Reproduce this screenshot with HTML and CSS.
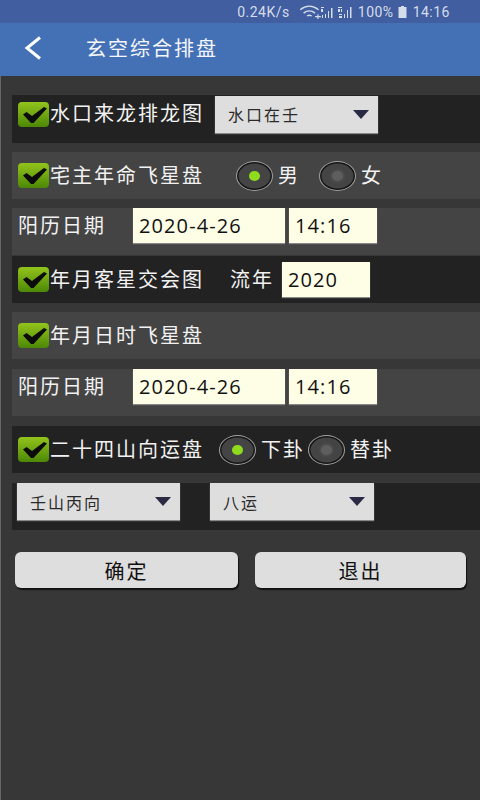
FILE: index.html
```html
<!DOCTYPE html>
<html lang="zh">
<head>
  <meta charset="UTF-8">
  <title>玄空综合排盘</title>
  <link rel="stylesheet" href="styles.css">
</head>
<body>

  <svg class="defs" width="0" height="0">
    <defs>
      <linearGradient id="chk" x1="0" y1="0" x2="0" y2="1">
        <stop offset="0" stop-color="#93c41c"/>
        <stop offset="1" stop-color="#4c8806"/>
      </linearGradient>
      <symbol id="check" viewBox="0 0 31 25">
        <rect width="31" height="25" rx="4" fill="url(#chk)"/>
        <path d="M5 12.500l3.500-2.500 5.500 4L26 5l3 1.500L15.500 21h-2.500z" fill="#0c0c0c"/>
      </symbol>
    </defs>
  </svg>

  <div class="status">
    <span>0.24K/s</span>
    <svg class="sig wifi" viewBox="0 0 20 12" width="23" height="14">
      <path d="M1 4c5-4 11-4 16 0M4 7c3-2.500 7-2.500 10 0M7 9.500c1.500-1 2.500-1 4 0" fill="none" stroke="#d5dcea" stroke-width="1.200"/>
      <path d="M14 10h5M16.500 8v4" stroke="#d5dcea" stroke-width="1"/>
    </svg>
    <svg class="sig one" viewBox="0 0 15 12" width="15" height="12">
      <path d="M1 1h3v1h-3zM1 3h2v3h-2zM2 9h1v3h-1zM5 8h1v4h-1zM8 5h1v7h-1zM11 2h1.500v10h-1.500z" fill="#d5dcea"/>
    </svg>
    <svg class="sig" viewBox="0 0 15 12" width="15" height="12">
      <path d="M0 1h4v1h-4zM0 3h2v3h-2zM3 3h1v3h-1zM1 8h3v1h-3zM1 10h3v2h-3zM6 8h1v4h-1zM9 4h1v8h-1zM12 1h1.500v11h-1.500z" fill="#d5dcea"/>
    </svg>
    <span class="pct">100%</span>
    <svg class="batt" viewBox="0 0 9 12" width="9" height="12">
      <path d="M3 0h3v1h2.500v11h-8v-11h2.500z" fill="#d5dcea"/>
    </svg>
    <span class="clock">14:16</span>
  </div>

  <header class="title">
    <svg class="back" viewBox="0 0 18 24" width="18" height="24">
      <path d="M16 1.500L3 12l13 10.500" fill="none" stroke="#fff" stroke-width="3"/>
    </svg>
    <h1>玄空综合排盘</h1>
  </header>

  <main class="form">
    <div class="row dark first">
      <svg class="check"><use href="#check"/></svg>
      <span class="label">水口来龙排龙图</span>
      <div class="select wide"><span>水口在壬</span><i class="arrow"></i></div>
    </div>

    <div class="row gap">
      <svg class="check"><use href="#check"/></svg>
      <span class="label">宅主年命飞星盘</span>
      <div class="radios sex">
        <span class="radio on"></span><span class="label">男</span>
        <span class="radio"></span><span class="label">女</span>
      </div>
    </div>

    <div class="row gap top">
      <span class="label date-label">阳历日期</span>
      <div class="input date">2020-4-26</div>
      <div class="input time">14:16</div>
    </div>

    <div class="row dark tight">
      <svg class="check"><use href="#check"/></svg>
      <span class="label">年月客星交会图</span>
      <span class="label liunian">流年</span>
      <div class="input year">2020</div>
    </div>

    <div class="row gap">
      <svg class="check"><use href="#check"/></svg>
      <span class="label">年月日时飞星盘</span>
    </div>

    <div class="row gap-wide top">
      <span class="label date-label">阳历日期</span>
      <div class="input date">2020-4-26</div>
      <div class="input time">14:16</div>
    </div>

    <div class="row dark gap-wide">
      <svg class="check"><use href="#check"/></svg>
      <span class="label">二十四山向运盘</span>
      <div class="radios gua">
        <span class="radio on"></span><span class="label">下卦</span>
        <span class="radio"></span><span class="label">替卦</span>
      </div>
    </div>

    <div class="row dark gap-wide selects">
      <div class="select"><span>壬山丙向</span><i class="arrow"></i></div>
      <div class="select"><span>八运</span><i class="arrow"></i></div>
    </div>

    <div class="buttons">
      <button class="btn ok">确定</button>
      <button class="btn quit">退出</button>
    </div>
  </main>

</body>
</html>
```

FILE: styles.css
```css
html {
  box-sizing: border-box;
  background: #373737;
}

*, *:before, *:after {
  box-sizing: inherit;
}

body {
  margin: 0;
  width: 480px;
  height: 800px;
  overflow: hidden;
  font-family: "Noto Sans CJK SC", "Liberation Sans", sans-serif;
}

.defs {
  display: block;
  height: 0;
}

.status {
  height: 23px;
  background: #415ea0;
  color: #d5dcea;
  font-family: Roboto, sans-serif;
  font-size: 14px;
  letter-spacing: 0.5px;
  display: flex;
  align-items: center;
  justify-content: flex-end;
  padding-right: 30px;
  gap: 4px;
}

.sig.wifi {
  margin-left: 5px;
  margin-right: -6px;
}

.sig.one {
  margin-right: -1px;
}

.pct {
  margin-left: 1px;
}

.clock {
  margin-left: 2px;
}

.title {
  height: 53px;
  background: #4471b6;
  display: flex;
  align-items: center;
  padding-left: 24px;
}

.back {
  flex: none;
  margin-top: -4px;
}

.title h1 {
  margin: 0 0 0 44px;
  font-size: 20px;
  line-height: 28px;
  font-weight: 400;
  letter-spacing: 2px;
  color: #f4f6fb;
  position: relative;
  top: -2px;
}

.form {
  height: 724px;
  padding: 19px 0 0 12px;
  border-left: 1px solid #666;
}

.row {
  height: 47px;
  margin-left: -1px;
  background: #444;
  display: flex;
  align-items: center;
  padding-left: 6px;
}

.row.dark {
  background: #222;
}

.row.gap {
  margin-top: 9px;
}

.row.gap-wide {
  margin-top: 10px;
}

.row.tight {
  margin-top: 1px;
}

.row.top {
  padding-bottom: 12px;
}

.row.first {
  height: 48px;
  padding-bottom: 10px;
}

.check {
  width: 31px;
  height: 25px;
  flex: none;
  margin-right: 1px;
}

.label {
  color: #f2f2f2;
  font-size: 20px;
  line-height: 28px;
  letter-spacing: 2px;
  white-space: nowrap;
  padding-bottom: 2px;
}

.date-label {
  width: 115px;
}

.select {
  width: 163px;
  height: 37px;
  background: #dedede;
  color: #2a2a2a;
  font-size: 16px;
  letter-spacing: 2px;
  display: flex;
  align-items: center;
  justify-content: space-between;
  padding: 0 9px 0 13px;
  box-shadow: 0 1px 1px #888;
}

.select.wide {
  margin-left: 11px;
}

.arrow {
  width: 0;
  height: 0;
  border-left: 8.500px solid transparent;
  border-right: 8.500px solid transparent;
  border-top: 9px solid #2a2a44;
}

.selects {
  padding-left: 5px;
  padding-bottom: 10px;
  gap: 30px;
}

.selects .select + .select {
  width: 164px;
}

.input {
  height: 35px;
  background: #fefee6;
  color: #111;
  font-family: "Open Sans", sans-serif;
  font-size: 20px;
  letter-spacing: 1.100px;
  display: flex;
  align-items: center;
  padding-left: 6px;
  box-shadow: 0 1px 1px #888;
}

.date {
  width: 152px;
}

.time {
  width: 88px;
  margin-left: 4px;
}

.year {
  width: 88px;
  margin-left: 8px;
}

.liunian {
  margin-left: 26px;
}

.radios {
  display: flex;
  align-items: center;
}

.sex {
  margin-left: 32px;
}

.gua {
  margin-left: 15px;
}

.radio {
  width: 37px;
  height: 30px;
  border-radius: 50%;
  border: 1.500px solid #a0a0a0;
  background: #444;
  box-shadow: inset 0 0 0 1.500px #151515;
  display: flex;
  align-items: center;
  justify-content: center;
  margin-right: 5px;
}

.radio:after {
  content: '';
  width: 11px;
  height: 10px;
  border-radius: 50%;
  background: #5e5e5e;
  box-shadow: 0 0 4px #5e5e5e;
}

.radio.on:after {
  background: #8fdc1e;
  box-shadow: none;
}

.sex .label + .radio {
  margin-left: 19px;
}

.gua .label + .radio {
  margin-left: 3px;
}

.buttons {
  display: flex;
  margin-top: 22px;
  margin-left: 2px;
  gap: 17px;
}

.btn {
  height: 36px;
  border: none;
  border-radius: 6px;
  background: #dedede;
  color: #111;
  font-family: inherit;
  font-size: 20px;
  letter-spacing: 2px;
  box-shadow: 1px 2px 1px #111;
  padding: 0;
}

.ok {
  width: 223px;
}

.quit {
  width: 211px;
}
```
